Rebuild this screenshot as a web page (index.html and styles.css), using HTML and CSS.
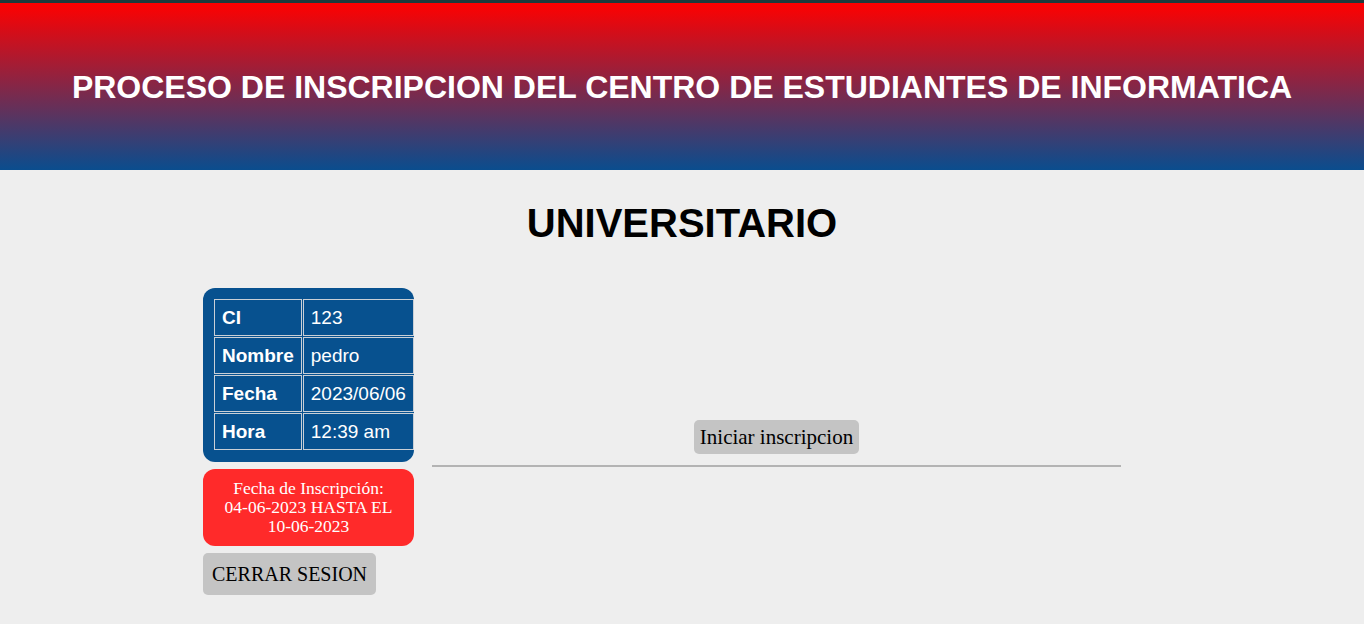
FILE: index.html
```html
<!DOCTYPE html>
<html lang="es">
<head>
<meta charset="utf-8">
<title>Inscripcion</title>
<link rel="stylesheet" href="styles.css">
</head>
<body>
<header class="top">
  <h1 class="top-title">PROCESO DE INSCRIPCION DEL CENTRO DE ESTUDIANTES DE INFORMATICA</h1>
</header>
<h2 class="section-title">UNIVERSITARIO</h2>
<main class="layout">
  <aside class="side">
    <div class="card">
      <table class="info">
        <tr><th>CI</th><td>123</td></tr>
        <tr><th>Nombre</th><td>pedro</td></tr>
        <tr><th>Fecha</th><td>2023/06/06</td></tr>
        <tr><th>Hora</th><td>12:39 am</td></tr>
      </table>
    </div>
    <div class="notice">Fecha de Inscripción:<br>04-06-2023 HASTA EL<br>10-06-2023</div>
    <div><button class="btn btn-close">CERRAR SESION</button></div>
  </aside>
  <section class="content">
    <button class="btn btn-start">Iniciar inscripcion</button>
    <hr class="rule">
  </section>
</main>
</body>
</html>
```

FILE: styles.css
```css
html, body {
  margin: 0;
  padding: 0;
}
body {
  background: #eeeeee;
  font-family: "Liberation Sans", Arial, sans-serif;
  color: #000;
  border-top: 3px solid #1f3a3c;
}
.top {
  height: 167px;
  display: flex;
  align-items: center;
  justify-content: center;
  background: linear-gradient(to bottom, #ff0000 0%, #0a4d8e 100%);
}
.top-title {
  margin: 0;
  color: #ffffff;
  font-size: 32px;
  font-weight: bold;
  text-align: center;
  padding-top: 2px;
}
.section-title {
  margin: 30px 0 0 0;
  font-size: 40px;
  font-weight: bold;
  text-align: center;
  line-height: 46px;
}
.layout {
  width: 958px;
  margin: 42px auto 0;
  display: flex;
  align-items: center;
  gap: 18px;
}
.side {
  width: 211px;
  flex: none;
  display: flex;
  flex-direction: column;
  gap: 7px;
}
.card {
  box-sizing: border-box;
  width: 211px;
  background: #07518f;
  border-radius: 12px;
  padding: 10px 10px 11px;
}
.info {
  border-collapse: separate;
  border-spacing: 1px;
  color: #ffffff;
  font-size: 19px;
  line-height: 21px;
}
.info th,
.info td {
  border: 1px solid #c9cfd6;
  padding: 7px;
  text-align: left;
  white-space: nowrap;
}
.info th {
  font-weight: bold;
  width: 72px;
}
.info td {
  font-weight: normal;
}
.notice {
  box-sizing: border-box;
  width: 211px;
  background: #ff2a2a;
  color: #ffffff;
  border-radius: 12px;
  padding: 10px 8px 10px;
  text-align: center;
  font-family: "Liberation Serif", "Times New Roman", serif;
  font-size: 17.5px;
  line-height: 19px;
}
.btn {
  background: #c4c4c4;
  border: none;
  border-radius: 5px;
  color: #000;
  font-family: "Liberation Serif", "Times New Roman", serif;
  cursor: pointer;
}
.btn-close {
  font-size: 20px;
  line-height: 22px;
  padding: 10px 9px;
}
.btn-start {
  font-size: 21px;
  line-height: 22px;
  padding: 6px 6px;
}
.content {
  width: 689px;
  padding-top: 3px;
  display: flex;
  flex-direction: column;
  align-items: center;
}
.rule {
  width: 100%;
  margin: 11px 0 0;
  border: none;
  border-top: 2px solid #b3b3b3;
  height: 0;
}
```
